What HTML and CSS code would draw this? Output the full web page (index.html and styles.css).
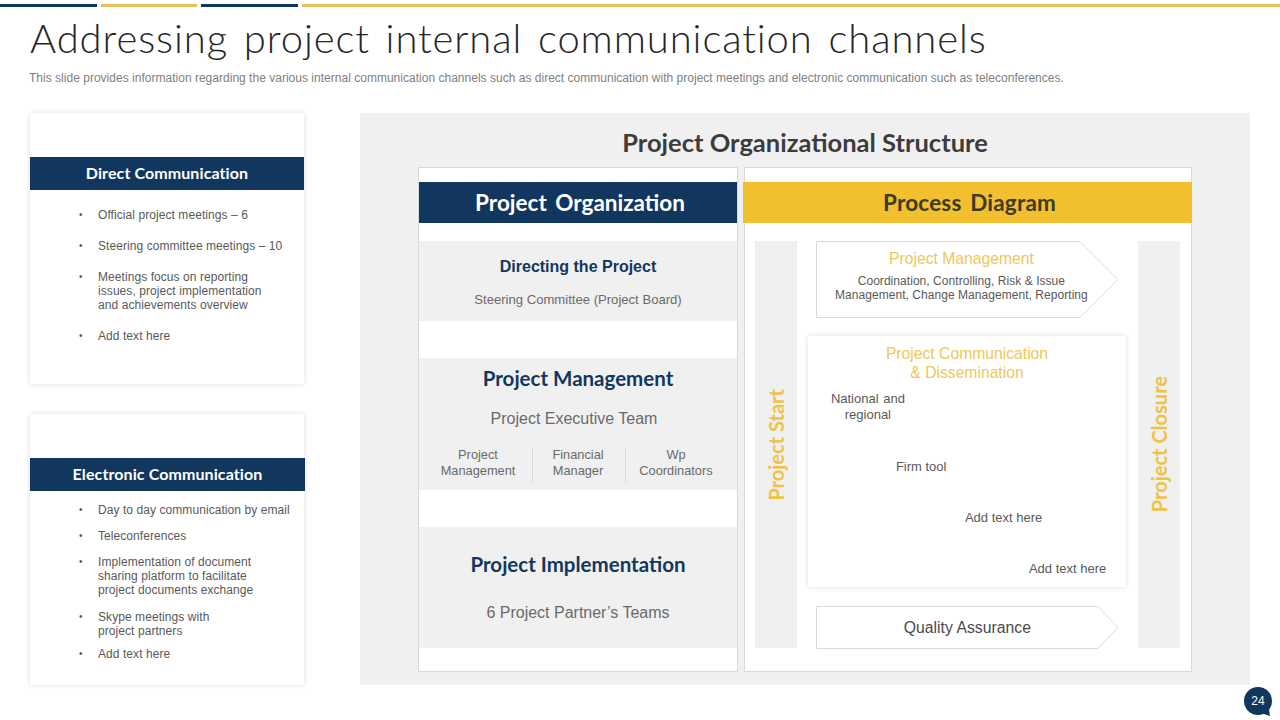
FILE: index.html
```html
<!DOCTYPE html>
<html lang="en">
<head>
<meta charset="utf-8">
<title>Addressing project internal communication channels</title>
<link rel="stylesheet" href="styles.css">
</head>
<body>
<div class="slide">
  <div class="topbars"><span class="bar navy"></span><span class="bar gold"></span><span class="bar navy"></span><span class="bar gold grow"></span></div>
  <h1 class="title">Addressing project internal communication channels</h1>
  <p class="subtitle">This slide provides information regarding the various internal communication channels such as direct communication with project meetings and electronic communication such as teleconferences.</p>
  <div class="main">
    <aside class="side">
      <section class="card">
        <h2 class="card-head">Direct Communication</h2>
        <ul class="list list-wide">
          <li>Official project meetings – 6</li>
          <li>Steering committee meetings – 10</li>
          <li>Meetings focus on reporting<br>issues, project implementation<br>and achievements overview</li>
          <li>Add text here</li>
        </ul>
      </section>
      <section class="card">
        <h2 class="card-head card-head-wide">Electronic Communication</h2>
        <ul class="list list-tight">
          <li>Day to day communication by email</li>
          <li>Teleconferences</li>
          <li>Implementation of document<br>sharing platform to facilitate<br>project documents exchange</li>
          <li class="skype">Skype meetings with<br>project partners</li>
          <li class="last">Add text here</li>
        </ul>
      </section>
    </aside>
    <section class="panel">
      <h2 class="panel-title">Project Organizational Structure</h2>
      <div class="columns">
        <div class="col col-org">
          <h3 class="col-head head-navy">Project Organization</h3>
          <div class="block block-a">
            <h4 class="b-title b-title-arial">Directing the Project</h4>
            <p class="b-sub-small">Steering Committee (Project Board)</p>
          </div>
          <div class="block block-b">
            <h4 class="b-title">Project Management</h4>
            <p class="b-sub">Project Executive Team</p>
            <div class="roles">
              <p class="role role-1">Project<br>Management</p>
              <p class="role role-2">Financial<br>Manager</p>
              <p class="role role-3">Wp<br>Coordinators</p>
            </div>
          </div>
          <div class="block block-c">
            <h4 class="b-title">Project Implementation</h4>
            <p class="b-sub">6 Project Partner’s Teams</p>
          </div>
        </div>
        <div class="col col-process">
          <h3 class="col-head head-gold">Process Diagram</h3>
          <div class="process">
            <div class="vbar"><span class="vtext">Project Start</span></div>
            <div class="center">
              <div class="arrow arrow-top">
                <svg class="arrow-shape" width="303" height="77" viewBox="0 0 303 77"><polygon points="0.5,0.5 264,0.5 302,38.5 264,76.5 0.5,76.5" fill="#fff" stroke="#d9d9d9"/></svg>
                <p class="arrow-title">Project Management</p>
                <p class="arrow-text">Coordination, Controlling, Risk &amp; Issue<br>Management, Change Management, Reporting</p>
              </div>
              <div class="comm">
                <p class="comm-title">Project Communication<br>&amp; Dissemination</p>
                <p class="comm-item item-1">National and<br>regional</p>
                <p class="comm-item item-2">Firm tool</p>
                <p class="comm-item item-3">Add text here</p>
                <p class="comm-item item-4">Add text here</p>
              </div>
              <div class="arrow arrow-qa">
                <svg class="arrow-shape" width="303" height="43" viewBox="0 0 303 43"><polygon points="0.5,0.5 282,0.5 302,21.5 282,42.5 0.5,42.5" fill="#fff" stroke="#d9d9d9"/></svg>
                <p class="qa-text">Quality Assurance</p>
              </div>
            </div>
            <div class="vbar"><span class="vtext">Project Closure</span></div>
          </div>
        </div>
      </div>
    </section>
  </div>
  <div class="page-badge">24<svg class="badge-tail" width="10" height="8" viewBox="0 0 10 8"><polygon points="0,0 8,0 9,7 3,5" fill="#12375f"/></svg></div>
</div>
</body>
</html>
```
FILE: styles.css
```css
* { box-sizing: border-box; }
html, body { margin: 0; padding: 0; background: #fff; }
p, h1, h2, h3, h4, ul { margin: 0; padding: 0; }
.slide { position: relative; width: 1280px; height: 720px; overflow: hidden; font-family: "Liberation Sans", Arial, sans-serif; color: #595959; }
.topbars { display: flex; gap: 4px; padding-top: 4px; }
.bar { display: block; width: 97px; height: 3px; }
.bar:nth-child(2) { width: 96px; }
.navy { background: #12375f; }
.gold { background: #e8c15c; }
.grow { flex: 1; }
.title { margin: 6px 0 0 30px; font: 300 40px/50px Lato, sans-serif; color: #262626; letter-spacing: .9px; word-spacing: 4px; white-space: nowrap; }
.subtitle { margin: 7px 0 0 29px; font-size: 12px; line-height: 16px; color: #808080; letter-spacing: .016px; white-space: nowrap; }
.main { display: flex; margin: 27px 0 0 30px; }
.side { width: 274px; display: flex; flex-direction: column; gap: 30px; }
.card { height: 271px; padding-top: 44px; background: #fff; box-shadow: 0 0 5px rgba(0,0,0,.14); }
.card-head { height: 33px; background: #12375f; color: #fff; font: 700 16px/31px Lato, sans-serif; letter-spacing: .1px; text-align: center; }
.card-head-wide { width: 275px; }
.list { list-style: none; padding-left: 49px; font-size: 12px; line-height: 14px; color: #595959; letter-spacing: .07px; white-space: nowrap; }
.list li { position: relative; padding-left: 19px; }
.list li::before { content: "•"; position: absolute; left: 0; top: 0; font-size: 10px; }
.list-wide { padding-top: 18px; }
.list-wide li + li { margin-top: 17px; }
.list-tight { padding-top: 12px; }
.list-tight li + li { margin-top: 12px; }
.list-tight li.skype { margin-top: 13px; }
.list-tight li.last { margin-top: 9px; }
.panel { width: 890px; height: 572px; margin-left: 56px; background: #f0f0f0; }
.panel-title { padding: 14px 0 0 0; font: 700 25.5px/30px Lato, sans-serif; color: #3c3c3c; text-align: center; height: 54px; }
.columns { display: flex; gap: 6px; margin-left: 58px; }
.col { height: 505px; background: #fff; border: 1px solid #d9d9d9; padding-top: 14px; }
.col-org { width: 320px; }
.col-process { width: 448px; }
.col-head { height: 41px; font: 700 22.5px/42px Lato, sans-serif; word-spacing: 3px; text-align: center; padding-left: 4px; }
.head-navy { background: #12375f; color: #fff; }
.head-gold { background: #f2c02e; color: #3f3a23; margin: 0 -1px 0 -2px; letter-spacing: .2px; }
.block { background: #f0f0f0; text-align: center; }
.block-a { height: 80px; margin-top: 18px; padding-top: 16px; }
.block-b { height: 132px; margin-top: 37px; padding-top: 8px; }
.block-c { height: 121px; margin-top: 37px; padding-top: 25px; }
.b-title { font: 700 20.5px/24px Lato, sans-serif; color: #12375f; }
.b-title-arial { font: 700 16px/20px "Liberation Sans", Arial, sans-serif; }
.b-sub-small { margin-top: 15px; font-size: 13.1px; line-height: 16px; color: #6a6a6a; }
.b-sub { margin-top: 19px; padding-right: 8px; font-size: 16px; line-height: 20px; color: #6a6a6a; }
.block-c .b-sub { margin-top: 27px; padding-right: 0; }
.roles { display: flex; margin-top: 18px; padding-left: 14px; font-size: 12.8px; line-height: 16px; color: #6a6a6a; }
.role { height: 36px; }
.role-1 { width: 99px; padding-right: 9px; }
.role-2 { width: 93px; border-left: 1px solid #d9d9d9; padding-right: 2px; }
.role-3 { width: 99px; border-left: 1px solid #d9d9d9; padding-left: 2px; }
.process { display: flex; padding: 18px 11px 0 10px; }
.vbar { width: 42px; height: 407px; background: #f0f0f0; display: flex; align-items: center; justify-content: center; }
.vtext { writing-mode: vertical-rl; transform: rotate(180deg); font: 700 20px/24px Lato, sans-serif; color: #eec245; white-space: nowrap; }
.center { width: 342px; position: relative; padding: 0 12px 0 11px; }
.arrow { position: relative; margin-left: 8px; width: 303px; text-align: center; }
.arrow-shape { position: absolute; left: 0; top: 0; }
.arrow p { position: relative; }
.arrow-top { height: 77px; padding-top: 8px; padding-right: 12px; }
.arrow-title { font-size: 15.7px; line-height: 20px; color: #eec75a; }
.arrow-text { margin-top: 5px; font-size: 12px; line-height: 14px; color: #595959; letter-spacing: .05px; }
.comm { position: relative; height: 251px; margin-top: 18px; background: #fff; box-shadow: 0 0 5px rgba(0,0,0,.14); display: flex; flex-direction: column; padding-top: 8px; }
.comm-title { font-size: 15.7px; line-height: 19px; color: #eec75a; text-align: center; }
.comm-item { font-size: 13px; line-height: 16px; color: #595959; text-align: center; white-space: nowrap; }
.item-1 { margin: 9px 0 0 23px; align-self: flex-start; word-spacing: 1px; }
.item-2 { margin: 36px 0 0 88px; align-self: flex-start; }
.item-3 { margin: 35px 0 0 157px; align-self: flex-start; }
.item-4 { margin: 35px 0 0 221px; align-self: flex-start; }
.arrow-qa { height: 43px; margin-top: 19px; }
.qa-text { font-size: 15.8px; line-height: 43px; color: #4a4a4a; }
.page-badge { position: absolute; left: 1244px; top: 687px; width: 28px; height: 28px; border-radius: 50%; background: #12375f; color: #fff; font-size: 12px; line-height: 28px; text-align: center; }
.badge-tail { position: absolute; left: 17px; top: 22px; }
```
